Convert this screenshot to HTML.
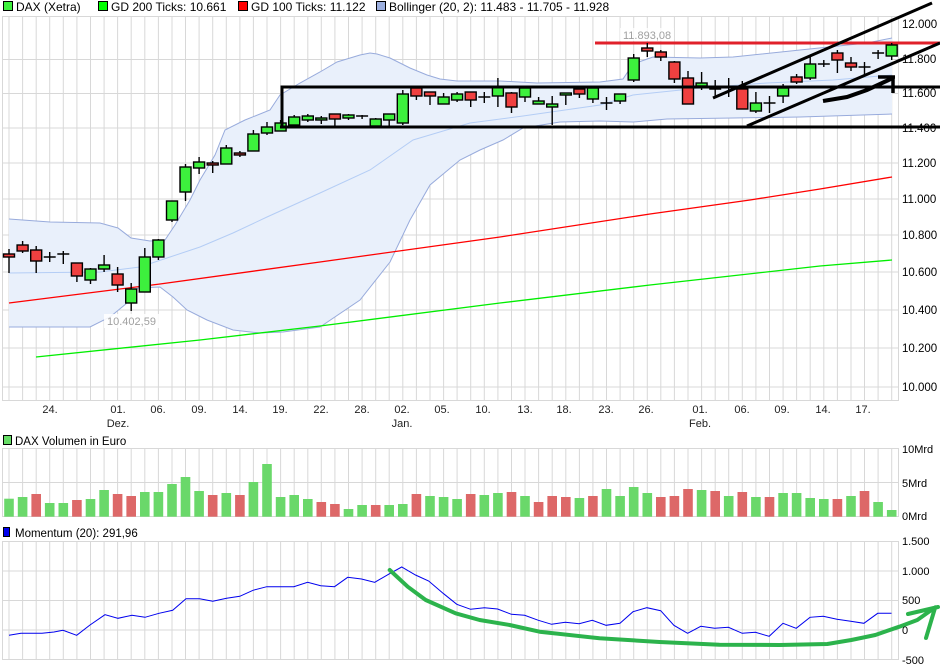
<!DOCTYPE html>
<html><head><meta charset="utf-8"><style>
html,body{margin:0;padding:0;background:#fff;width:940px;height:670px;overflow:hidden}
svg{display:block;font-family:"Liberation Sans",sans-serif}
</style></head><body>
<svg width="940" height="670" viewBox="0 0 940 670" xmlns="http://www.w3.org/2000/svg">
<!-- legend -->
<g font-size="12" fill="#000">
<rect x="3.5" y="1.5" width="9" height="9" fill="#3df03d" stroke="#000"/><text x="16" y="11">DAX (Xetra)</text>
<rect x="98.5" y="1.5" width="9" height="9" fill="#0f0" stroke="#000"/><text x="111" y="11">GD 200 Ticks: 10.661</text>
<rect x="238.5" y="1.5" width="9" height="9" fill="#f00" stroke="#000"/><text x="251" y="11">GD 100 Ticks: 11.122</text>
<rect x="376.5" y="1.5" width="9" height="9" fill="#9db0e0" stroke="#000"/><text x="389" y="11">Bollinger (20, 2): 11.483 - 11.705 - 11.928</text>
</g>
<!-- main grid -->
<g stroke="#d8d8d8" stroke-width="1">
<rect x="2.5" y="16.5" width="896" height="384" fill="none"/>
<path d="M9 17V400M22.6 17V400M36.2 17V400M49.7 17V400M63.3 17V400M76.9 17V400M90.5 17V400M104.1 17V400M117.6 17V400M131.2 17V400M144.8 17V400M158.4 17V400M172 17V400M185.5 17V400M199.1 17V400M212.7 17V400M226.3 17V400M239.9 17V400M253.4 17V400M267 17V400M280.6 17V400M294.2 17V400M307.8 17V400M321.3 17V400M334.9 17V400M348.5 17V400M362.1 17V400M375.7 17V400M389.2 17V400M402.8 17V400M416.4 17V400M430 17V400M443.6 17V400M457.1 17V400M470.7 17V400M484.3 17V400M497.9 17V400M511.5 17V400M525 17V400M538.6 17V400M552.2 17V400M565.8 17V400M579.4 17V400M592.9 17V400M606.5 17V400M620.1 17V400M633.7 17V400M647.3 17V400M660.8 17V400M674.4 17V400M688 17V400M701.6 17V400M715.2 17V400M728.7 17V400M742.3 17V400M755.9 17V400M769.5 17V400M783.1 17V400M796.6 17V400M810.2 17V400M823.8 17V400M837.4 17V400M851 17V400M864.5 17V400M878.1 17V400M891.7 17V400"/>
<path d="M2 59.5H898M2 93.5H898M2 128H898M2 163H898M2 199H898M2 235H898M2 272H898M2 310H898M2 348H898M2 387H898"/>
</g>
<!-- bollinger -->
<path d="M9 219L50 222L100 223L118 228L131 238L150 241L165 240L175 225L190 200L200 180L215 155L225 130L245 120L270 110L280 95L300 83L320 72L337 62L360 55L370 53L377 54L390 58L410 68L427 75L440 79L457 81L500 81L537 83L600 82L623 79L633 64L653 57L700 58L733 57L800 50L867 43L892 38L892 114L800 117L733 118L667 119L633 122L600 121L560 122L523 128L503 140L480 150L460 160L430 185L410 220L390 262L360 300L320 327L283 332L260 333L233 330L207 320L187 310L173 297L160 287L138 288L127 303L110 317L90 327L9 327Z" fill="#e9f0fb" stroke="none"/>
<path d="M9 219L50 222L100 223L118 228L131 238L150 241L165 240L175 225L190 200L200 180L215 155L225 130L245 120L270 110L280 95L300 83L320 72L337 62L360 55L370 53L377 54L390 58L410 68L427 75L440 79L457 81L500 81L537 83L600 82L623 79L633 64L653 57L700 58L733 57L800 50L867 43L892 38" fill="none" stroke="#98abdc" stroke-width="1"/>
<path d="M9 327L90 327L110 317L127 303L138 288L160 287L173 297L187 310L207 320L233 330L260 333L283 332L320 327L360 300L390 262L410 220L430 185L460 160L480 150L503 140L523 128L560 122L600 121L633 122L667 119L733 118L800 117L892 114" fill="none" stroke="#98abdc" stroke-width="1"/>
<path d="M9 273L100 272L140 267L167 258L200 247L233 233L267 217L320 193L370 170L413 140L470 123L523 116L600 105L633 95L700 88L767 83L833 80L892 75" fill="none" stroke="#b4cdf5" stroke-width="1"/>
<!-- MAs -->
<path d="M9 303L160 284L320 262L500 237L650 214L750 200L820 189L892 177" fill="none" stroke="#f00" stroke-width="1.3"/>
<path d="M36 357L200 340L320 326L500 303L650 285L820 266L892 260" fill="none" stroke="#0e0" stroke-width="1.3"/>
<!-- red resistance -->
<line x1="595" y1="43" x2="940" y2="43" stroke="#e0202a" stroke-width="3"/>
<rect x="620" y="28" width="54" height="13" fill="#fff" opacity="0.8"/>
<text x="623" y="39" font-size="11" fill="#a0a0a0">11.893,08</text>
<!-- candles -->
<g stroke="#000" stroke-width="1.4">
<path d="M9 249V273M22.6 241V253M36.2 246V273M49.7 252V262M63.3 251V264M76.9 263V282M90.5 268V284M104.1 255V272M117.6 267V292M131.2 283V311M144.8 248V292M158.4 239V260M172 201V222M185.5 164V201M199.1 157V174M212.7 161V173M226.3 145V164M239.9 151V157M253.4 130V151M267 122V135M280.6 120V131M294.2 115V125M307.8 114V122M321.3 116V124M334.9 114V126M348.5 114V120M362.1 115V119M375.7 118V126M389.2 114V126M402.8 90V125M416.4 88V100M430 92V105M443.6 93V104M457.1 92V102M470.7 92V107M484.3 92V103M497.9 78V107M511.5 92V113M525 88V102M538.6 97V104M552.2 96V125M565.8 93V105M579.4 89V98M592.9 88V103M606.5 97V110M620.1 94V104M633.7 54V82M647.3 43V57M660.8 50V61M674.4 61V83M688 71V104M701.6 72V90M715.2 80V97M728.7 78V97M742.3 81V109M755.9 92V113M769.5 96V113M783.1 84V103M796.6 74V84M810.2 56V80M823.8 60V67M837.4 50V73M851 57V71M864.5 62V75M878.1 50V59M891.7 43V60"/>
<path d="M43.7 257H55.7M57.3 254H69.3M356.1 116H368.1M478.3 97H490.3M600.5 103H612.5M709.2 89H721.2M722.7 87H734.7M763.5 103H775.5M817.8 64H829.8M858.5 67H870.5M872.1 53H884.1"/>
<g fill="#f04040">
<rect x="3.5" y="254" width="11" height="3"/><rect x="17.1" y="245" width="11" height="6"/><rect x="30.7" y="250" width="11" height="11"/><rect x="71.4" y="263" width="11" height="13"/><rect x="112.1" y="274" width="11" height="11"/><rect x="207.2" y="163" width="11" height="2"/><rect x="234.4" y="153" width="11" height="2"/><rect x="329.4" y="114" width="11" height="5"/><rect x="410.9" y="88" width="11" height="8"/><rect x="424.5" y="92" width="11" height="4"/><rect x="465.2" y="92" width="11" height="8"/><rect x="506" y="93" width="11" height="14"/><rect x="573.9" y="89" width="11" height="5"/><rect x="641.8" y="48" width="11" height="3"/><rect x="655.3" y="52" width="11" height="5"/><rect x="668.9" y="62" width="11" height="17"/><rect x="682.5" y="78" width="11" height="26"/><rect x="736.8" y="89" width="11" height="20"/><rect x="791.1" y="77" width="11" height="5"/><rect x="831.9" y="53" width="11" height="7"/><rect x="845.5" y="63" width="11" height="4"/>
</g>
<g fill="#3df03d">
<rect x="85" y="269" width="11" height="11"/><rect x="98.6" y="265" width="11" height="4"/><rect x="125.7" y="289" width="11" height="14"/><rect x="139.3" y="257" width="11" height="35"/><rect x="152.9" y="240" width="11" height="17"/><rect x="166.5" y="201" width="11" height="19"/><rect x="180" y="167" width="11" height="25"/><rect x="193.6" y="162" width="11" height="6"/><rect x="220.8" y="148" width="11" height="16"/><rect x="247.9" y="134" width="11" height="17"/><rect x="261.5" y="127" width="11" height="6"/><rect x="275.1" y="123" width="11" height="8"/><rect x="288.7" y="117" width="11" height="8"/><rect x="302.3" y="116" width="11" height="4"/><rect x="315.8" y="118" width="11" height="2"/><rect x="343" y="115" width="11" height="3"/><rect x="370.2" y="119" width="11" height="7"/><rect x="383.7" y="114" width="11" height="6"/><rect x="397.3" y="94" width="11" height="29"/><rect x="438.1" y="97" width="11" height="7"/><rect x="451.6" y="94" width="11" height="6"/><rect x="492.4" y="87" width="11" height="9"/><rect x="519.5" y="88" width="11" height="9"/><rect x="533.1" y="101" width="11" height="3"/><rect x="546.7" y="104" width="11" height="3"/><rect x="560.3" y="93" width="11" height="2"/><rect x="587.4" y="88" width="11" height="11"/><rect x="614.6" y="94" width="11" height="7"/><rect x="628.2" y="58" width="11" height="22"/><rect x="696.1" y="83" width="11" height="3"/><rect x="750.4" y="103" width="11" height="8"/><rect x="777.6" y="88" width="11" height="8"/><rect x="804.7" y="64" width="11" height="14"/><rect x="886.2" y="45" width="11" height="11"/>
</g>
</g>
<rect x="104" y="314" width="55" height="14" fill="#fff" opacity="0.85"/>
<text x="107" y="325" font-size="11" fill="#a0a0a0">10.402,59</text>
<!-- drawn trend lines -->
<g stroke="#000" stroke-width="3" fill="none">
<path d="M282 127V87H940M280 127H940"/>
<path d="M713 98L932 3"/>
<path d="M747 126L940 43"/>
<path d="M823 101L847 97L867 90L893 78" stroke-width="4"/>
<path d="M878 77H895M893 77V93" stroke-width="3.5"/>
</g>
<!-- y labels -->
<g font-size="11.5" fill="#000">
<text x="902" y="28">12.000</text><text x="902" y="63">11.800</text><text x="902" y="97">11.600</text><text x="902" y="132">11.400</text><text x="902" y="167">11.200</text><text x="902" y="203">11.000</text><text x="902" y="239">10.800</text><text x="902" y="276">10.600</text><text x="902" y="314">10.400</text><text x="902" y="352">10.200</text><text x="902" y="391">10.000</text>
</g>
<!-- x labels -->
<g font-size="11" fill="#222" text-anchor="middle">
<text x="50" y="413">24.</text><text x="118" y="413">01.</text><text x="158" y="413">06.</text><text x="199" y="413">09.</text><text x="240" y="413">14.</text><text x="280" y="413">19.</text><text x="321" y="413">22.</text><text x="362" y="413">28.</text><text x="402" y="413">02.</text><text x="442" y="413">05.</text><text x="483" y="413">10.</text><text x="525" y="413">13.</text><text x="564" y="413">18.</text><text x="606" y="413">23.</text><text x="646" y="413">26.</text><text x="700" y="413">01.</text><text x="742" y="413">06.</text><text x="782" y="413">09.</text><text x="823" y="413">14.</text><text x="863" y="413">17.</text>
<text x="118" y="427">Dez.</text><text x="402" y="427">Jan.</text><text x="700" y="427">Feb.</text>
</g>
<!-- volume panel -->
<rect x="3.5" y="435.5" width="8" height="9" fill="#66dd66" stroke="#000"/><text x="15" y="445" font-size="11.5">DAX Volumen in Euro</text>
<g stroke="#d8d8d8">
<rect x="2.5" y="448.5" width="896" height="68" fill="none"/>
<path d="M2 482.5H898M9 449V517M22.6 449V517M36.2 449V517M49.7 449V517M63.3 449V517M76.9 449V517M90.5 449V517M104.1 449V517M117.6 449V517M131.2 449V517M144.8 449V517M158.4 449V517M172 449V517M185.5 449V517M199.1 449V517M212.7 449V517M226.3 449V517M239.9 449V517M253.4 449V517M267 449V517M280.6 449V517M294.2 449V517M307.8 449V517M321.3 449V517M334.9 449V517M348.5 449V517M362.1 449V517M375.7 449V517M389.2 449V517M402.8 449V517M416.4 449V517M430 449V517M443.6 449V517M457.1 449V517M470.7 449V517M484.3 449V517M497.9 449V517M511.5 449V517M525 449V517M538.6 449V517M552.2 449V517M565.8 449V517M579.4 449V517M592.9 449V517M606.5 449V517M620.1 449V517M633.7 449V517M647.3 449V517M660.8 449V517M674.4 449V517M688 449V517M701.6 449V517M715.2 449V517M728.7 449V517M742.3 449V517M755.9 449V517M769.5 449V517M783.1 449V517M796.6 449V517M810.2 449V517M823.8 449V517M837.4 449V517M851 449V517M864.5 449V517M878.1 449V517M891.7 449V517"/>
</g>
<g stroke="none">
<g fill="#6ad86a">
<rect x="4.2" y="498.7" width="9.6" height="18"/><rect x="17.8" y="497" width="9.6" height="19.7"/><rect x="44.9" y="503" width="9.6" height="13.7"/><rect x="58.5" y="503" width="9.6" height="13.7"/><rect x="85.7" y="499" width="9.6" height="17.7"/><rect x="99.3" y="490" width="9.6" height="26.7"/><rect x="140" y="492" width="9.6" height="24.7"/><rect x="153.6" y="492" width="9.6" height="24.7"/><rect x="167.2" y="484" width="9.6" height="32.7"/><rect x="180.7" y="477" width="9.6" height="39.7"/><rect x="194.3" y="491" width="9.6" height="25.7"/><rect x="221.5" y="493" width="9.6" height="23.7"/><rect x="248.6" y="482" width="9.6" height="34.7"/><rect x="262.2" y="464" width="9.6" height="52.7"/><rect x="275.8" y="497" width="9.6" height="19.7"/><rect x="289.4" y="495" width="9.6" height="21.7"/><rect x="303" y="499" width="9.6" height="17.7"/><rect x="343.7" y="509" width="9.6" height="7.7"/><rect x="357.3" y="505" width="9.6" height="11.7"/><rect x="384.4" y="505" width="9.6" height="11.7"/><rect x="398" y="504" width="9.6" height="12.7"/><rect x="425.2" y="496" width="9.6" height="20.7"/><rect x="438.8" y="497" width="9.6" height="19.7"/><rect x="452.3" y="499" width="9.6" height="17.7"/><rect x="479.5" y="495" width="9.6" height="21.7"/><rect x="493.1" y="493" width="9.6" height="23.7"/><rect x="520.2" y="496" width="9.6" height="20.7"/><rect x="574.6" y="498" width="9.6" height="18.7"/><rect x="601.7" y="489" width="9.6" height="27.7"/><rect x="628.9" y="487" width="9.6" height="29.7"/><rect x="615.3" y="496" width="9.6" height="20.7"/><rect x="642.5" y="493" width="9.6" height="23.7"/><rect x="696.8" y="490" width="9.6" height="26.7"/><rect x="723.9" y="496" width="9.6" height="20.7"/><rect x="751.1" y="497" width="9.6" height="19.7"/><rect x="778.3" y="493" width="9.6" height="23.7"/><rect x="791.8" y="493" width="9.6" height="23.7"/><rect x="805.4" y="498" width="9.6" height="18.7"/><rect x="819" y="499" width="9.6" height="17.7"/><rect x="846.2" y="496" width="9.6" height="20.7"/><rect x="873.3" y="502" width="9.6" height="14.7"/><rect x="886.9" y="510" width="9.6" height="6.7"/>
</g>
<g fill="#dd6868">
<rect x="31.4" y="494" width="9.6" height="22.7"/><rect x="72.1" y="500" width="9.6" height="16.7"/><rect x="112.8" y="494" width="9.6" height="22.7"/><rect x="126.4" y="496" width="9.6" height="20.7"/><rect x="207.9" y="495" width="9.6" height="21.7"/><rect x="235.1" y="495" width="9.6" height="21.7"/><rect x="316.5" y="502" width="9.6" height="14.7"/><rect x="330.1" y="504" width="9.6" height="12.7"/><rect x="370.9" y="505" width="9.6" height="11.7"/><rect x="411.6" y="494" width="9.6" height="22.7"/><rect x="465.9" y="494" width="9.6" height="22.7"/><rect x="506.7" y="492" width="9.6" height="24.7"/><rect x="533.8" y="502" width="9.6" height="14.7"/><rect x="547.4" y="496" width="9.6" height="20.7"/><rect x="561" y="497" width="9.6" height="19.7"/><rect x="588.1" y="496" width="9.6" height="20.7"/><rect x="656" y="497" width="9.6" height="19.7"/><rect x="669.6" y="496" width="9.6" height="20.7"/><rect x="683.2" y="489" width="9.6" height="27.7"/><rect x="710.4" y="491" width="9.6" height="25.7"/><rect x="737.5" y="492" width="9.6" height="24.7"/><rect x="764.7" y="497" width="9.6" height="19.7"/><rect x="832.6" y="499" width="9.6" height="17.7"/><rect x="859.7" y="491" width="9.6" height="25.7"/>
</g>
</g>
<g font-size="11" fill="#000"><text x="902" y="453">10Mrd</text><text x="902" y="487">5Mrd</text><text x="902" y="520">0Mrd</text></g>
<!-- momentum panel -->
<rect x="3.5" y="527.5" width="6" height="9" fill="#0000ee" stroke="#000"/><text x="15" y="537" font-size="11.5">Momentum (20): 291,96</text>
<g stroke="#d8d8d8">
<rect x="2.5" y="541.5" width="896" height="118" fill="none"/>
<path d="M2 571H898M2 600.5H898M2 630H898M9 542V660M22.6 542V660M36.2 542V660M49.7 542V660M63.3 542V660M76.9 542V660M90.5 542V660M104.1 542V660M117.6 542V660M131.2 542V660M144.8 542V660M158.4 542V660M172 542V660M185.5 542V660M199.1 542V660M212.7 542V660M226.3 542V660M239.9 542V660M253.4 542V660M267 542V660M280.6 542V660M294.2 542V660M307.8 542V660M321.3 542V660M334.9 542V660M348.5 542V660M362.1 542V660M375.7 542V660M389.2 542V660M402.8 542V660M416.4 542V660M430 542V660M443.6 542V660M457.1 542V660M470.7 542V660M484.3 542V660M497.9 542V660M511.5 542V660M525 542V660M538.6 542V660M552.2 542V660M565.8 542V660M579.4 542V660M592.9 542V660M606.5 542V660M620.1 542V660M633.7 542V660M647.3 542V660M660.8 542V660M674.4 542V660M688 542V660M701.6 542V660M715.2 542V660M728.7 542V660M742.3 542V660M755.9 542V660M769.5 542V660M783.1 542V660M796.6 542V660M810.2 542V660M823.8 542V660M837.4 542V660M851 542V660M864.5 542V660M878.1 542V660M891.7 542V660"/>
</g>
<path d="M9 635.3L21 633.3L42 633.3L54 632L63 630.3L76.7 635.3L90 625L105 614.7L118 618.3L132 615.3L145 617.3L159 613.3L172.7 610.3L186 598.7L199.6 598.7L212.8 601.3L226.6 598.3L239.8 596.3L253 590.3L266.8 586.7L293.8 586.7L307.6 582.3L320.7 585.7L334.5 586.7L347.7 577.3L361.5 579L374.7 582.3L388.5 574.3L401.7 567L415.5 575L428.7 581L443.6 593.7L456.8 604.3L470.6 609.3L484.4 607.7L497.6 609L511.4 614.3L524.6 615.3L538.4 620.3L551.6 624.3L565.3 622.3L579.1 623.7L592.3 620.3L606.1 625.3L620 623.3L633 611.7L646.9 607.7L660.7 610.7L673.9 625.3L687.6 633.3L700.8 626.3L714.6 628.3L728.4 627.3L742.2 633.3L755.4 632.3L769.2 636.3L783 623.3L796.2 628.3L810 617.3L823.2 616.3L837 619.3L850.7 621.3L863.9 623.3L877.7 613.3L891.5 613.3" fill="none" stroke="#0000ee" stroke-width="1"/>
<path d="M389.7 570L407.7 586.7L425.7 600L455.6 613.3L479.6 620L509.6 625L539.6 631.7L599.5 638.3L659.5 642L719.4 644.7L779.4 645L827.3 644L851.3 640L875.3 635L899.3 626.7L917.3 620L935.3 607.3M908 614L938 607M935 608L926 638" fill="none" stroke="#2cb34c" stroke-width="4" stroke-linecap="round" stroke-linejoin="round"/>
<g font-size="11" fill="#000"><text x="902" y="545">1.500</text><text x="902" y="575">1.000</text><text x="902" y="604">500</text><text x="902" y="634">0</text><text x="902" y="664">-500</text></g>
</svg>
</body></html>
